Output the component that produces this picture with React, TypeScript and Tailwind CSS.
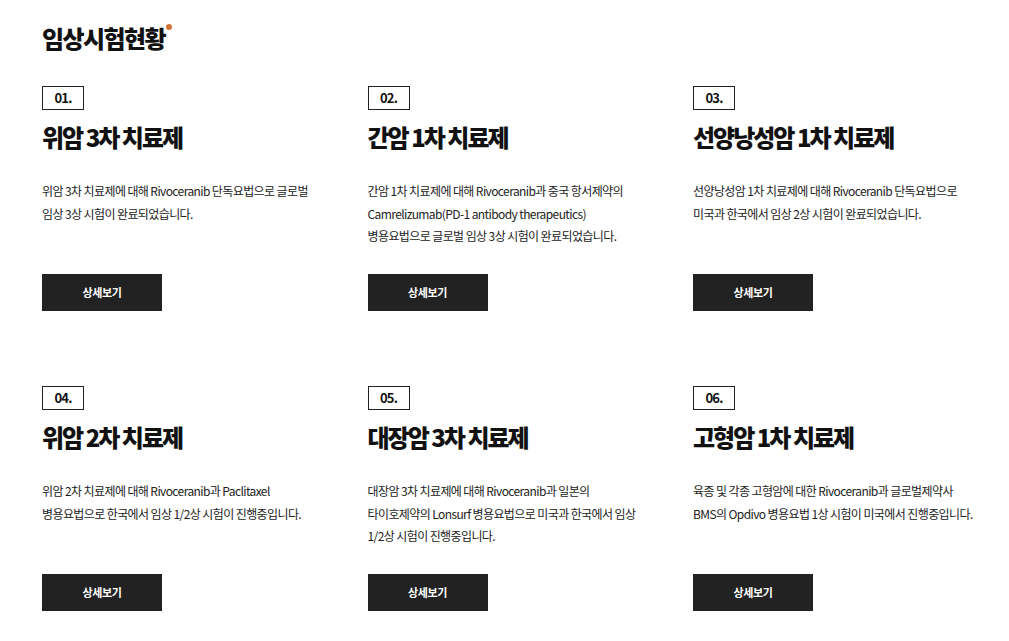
const trials = [
  {
    no: "01.",
    title: "위암 3차 치료제",
    lines: ["위암 3차 치료제에 대해 Rivoceranib 단독요법으로 글로벌", "임상 3상 시험이 완료되었습니다."],
  },
  {
    no: "02.",
    title: "간암 1차 치료제",
    lines: [
      "간암 1차 치료제에 대해 Rivoceranib과 중국 항서제약의",
      "Camrelizumab(PD-1 antibody therapeutics)",
      "병용요법으로 글로벌 임상 3상 시험이 완료되었습니다.",
    ],
  },
  {
    no: "03.",
    title: "선양낭성암 1차 치료제",
    lines: ["선양낭성암 1차 치료제에 대해 Rivoceranib 단독요법으로", "미국과 한국에서 임상 2상 시험이 완료되었습니다."],
  },
  {
    no: "04.",
    title: "위암 2차 치료제",
    lines: ["위암 2차 치료제에 대해 Rivoceranib과 Paclitaxel", "병용요법으로 한국에서 임상 1/2상 시험이 진행중입니다."],
  },
  {
    no: "05.",
    title: "대장암 3차 치료제",
    lines: [
      "대장암 3차 치료제에 대해 Rivoceranib과 일본의",
      "타이호제약의 Lonsurf 병용요법으로 미국과 한국에서 임상",
      "1/2상 시험이 진행중입니다.",
    ],
  },
  {
    no: "06.",
    title: "고형암 1차 치료제",
    lines: ["육종 및 각종 고형암에 대한 Rivoceranib과 글로벌제약사", "BMS의 Opdivo 병용요법 1상 시험이 미국에서 진행중입니다."],
  },
];

function TrialCard({ no, title, lines }: { no: string; title: string; lines: string[] }) {
  return (
    <div className="flex flex-col">
      <div className="w-[42px] h-[24px] border border-[#222] flex items-center justify-center text-[13px] font-bold text-[#111] tracking-[-0.8px]">
        {no}
      </div>
      <h3 className="mt-[11px] text-[24px] leading-[32px] font-black text-[#111] tracking-[-2px]">{title}</h3>
      <p className="mt-[27px] h-[94px] text-[12px] leading-[22.5px] text-[#222] tracking-[-0.6px]">
        {lines.map((l, i) => (
          <span key={i} className="block whitespace-nowrap">
            {l}
          </span>
        ))}
      </p>
      <button className="w-[120px] h-[37px] bg-[#222] text-white text-[11px] font-bold tracking-[-0.4px]">
        상세보기
      </button>
    </div>
  );
}

export default function App() {
  return (
    <div
      className="w-[1009px] h-[641px] overflow-hidden bg-white pl-[42px] pt-[20px]"
      style={{ fontFamily: '"Noto Sans CJK KR", "Noto Sans", sans-serif' }}
    >
      {/* Section heading */}
      <div className="relative inline-block">
        <h2 className="text-[24px] leading-[36px] font-black text-[#111] tracking-[-1.6px]">임상시험현황</h2>
        <span className="absolute -right-[7px] top-[4px] w-[6px] h-[6px] rounded-full bg-[#d2733c]" />
      </div>

      <div className="mt-[30px] grid grid-cols-[325.5px_325.5px_325.5px] gap-y-[75px]">
        {trials.map((t) => (
          <TrialCard key={t.no} {...t} />
        ))}
      </div>
    </div>
  );
}
